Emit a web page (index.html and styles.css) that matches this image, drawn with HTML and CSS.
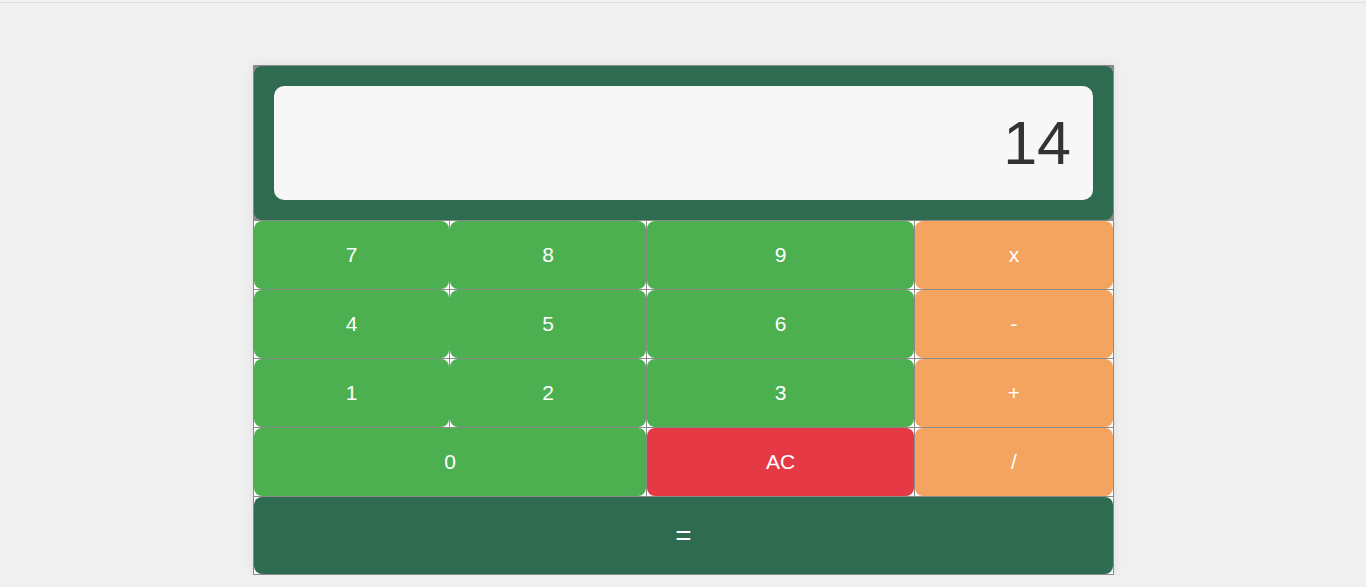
FILE: index.html
```html
<!DOCTYPE html>
<html lang="en">
<head>
<meta charset="utf-8">
<title>Calculator</title>
<link rel="stylesheet" href="styles.css">
</head>
<body>
<div class="topline"></div>
<main class="page">
  <div class="calc">
    <div class="cell display-cell"><div class="display">14</div></div>
    <div class="cell"><button class="key num">7</button></div>
    <div class="cell"><button class="key num">8</button></div>
    <div class="cell"><button class="key num">9</button></div>
    <div class="cell"><button class="key op">x</button></div>
    <div class="cell"><button class="key num">4</button></div>
    <div class="cell"><button class="key num">5</button></div>
    <div class="cell"><button class="key num">6</button></div>
    <div class="cell"><button class="key op">-</button></div>
    <div class="cell"><button class="key num">1</button></div>
    <div class="cell"><button class="key num">2</button></div>
    <div class="cell"><button class="key num">3</button></div>
    <div class="cell"><button class="key op">+</button></div>
    <div class="cell span2"><button class="key num">0</button></div>
    <div class="cell"><button class="key clear">AC</button></div>
    <div class="cell"><button class="key op">/</button></div>
    <div class="cell span4"><button class="key equals">=</button></div>
  </div>
</main>
</body>
</html>
```
FILE: styles.css
```css
html, body {
  margin: 0;
  padding: 0;
  background: #f0f0f0;
  font-family: "Liberation Sans", Arial, sans-serif;
}
.topline {
  margin-top: 2px;
  height: 1px;
  background: #dedede;
}
.page {
  display: flex;
  justify-content: center;
  padding-top: 62px;
  padding-left: 1px;
}
.calc {
  display: grid;
  grid-template-columns: 195px 196px 267px 198px;
  grid-template-rows: 154px 68px 68px 68px 68px 77px;
  gap: 1px;
  background: #8a8a8a;
  border: 1px solid #8a8a8a;
  box-shadow: 0 0 10px rgba(0, 0, 0, 0.08);
}
.cell {
  background: #ffffff;
  display: flex;
}
.display-cell {
  grid-column: 1 / span 4;
  background: #2e6b51;
  border-radius: 8px;
  padding: 20px;
  box-sizing: border-box;
}
.span2 { grid-column: span 2; }
.span4 { grid-column: span 4; }
.display {
  flex: 1;
  background: #f7f7f7;
  border-radius: 10px;
  color: #333333;
  font-size: 61px;
  padding: 0 22px;
  display: flex;
  align-items: center;
  justify-content: flex-end;
}
.key {
  flex: 1;
  border: none;
  border-radius: 8px;
  color: #ffffff;
  font-family: "Liberation Sans", Arial, sans-serif;
  font-size: 21px;
  padding: 0;
  margin: 0;
}
.num { background: #4caf50; }
.op { background: #f4a460; }
.clear { background: #e63946; }
.equals {
  background: #2e6b51;
  font-size: 28px;
}
```
